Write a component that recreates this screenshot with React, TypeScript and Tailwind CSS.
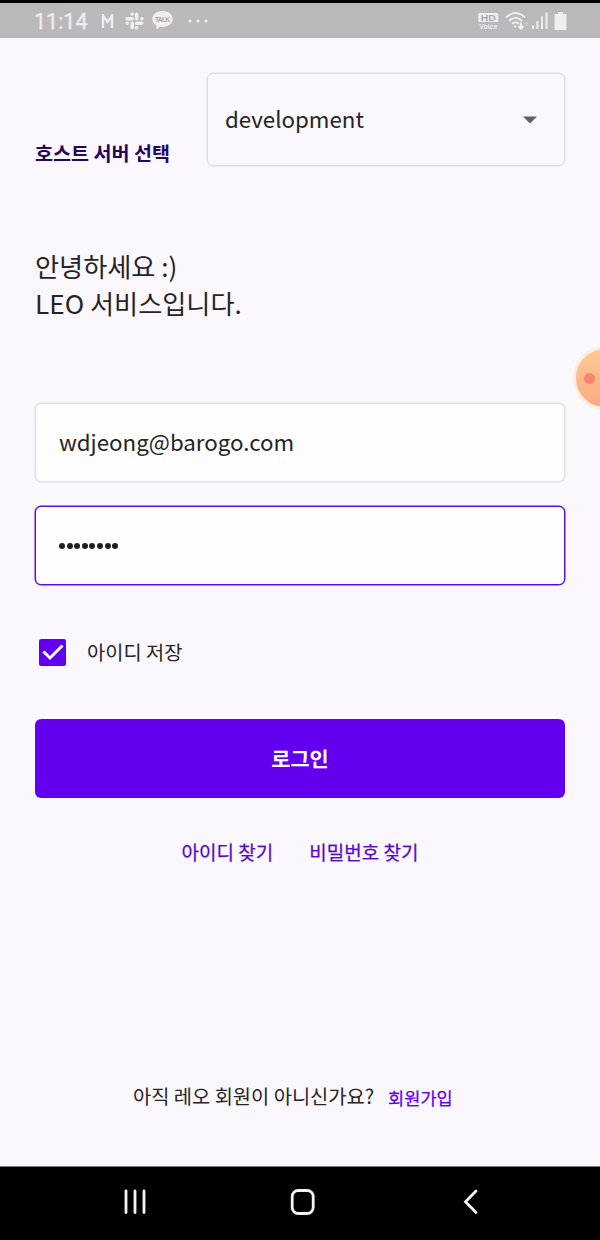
import type { ReactNode } from 'react';

function StatusBar() {
  return (
    <header className="flex h-[38px] shrink-0 items-center border-t-[3px] border-black bg-[#bbb8bb] pl-[34px] pr-[33px] text-[#efedef]">
      <span className="w-[54px] pt-[2px] font-['Roboto'] text-[21.500px] leading-[33px] [-webkit-text-stroke:0.3px]">11:14</span>
      <svg className="ml-[13px]" width="13" height="14" viewBox="0 0 13 14" fill="none" stroke="currentColor" strokeWidth="2.300">
        <path d="M2 14V1.500L6.500 8L11 1.500V14" />
      </svg>
      <svg className="ml-[11px]" width="19" height="18" viewBox="0 0 19 18" fill="none" stroke="currentColor" strokeWidth="3.600" strokeLinecap="round">
        <path d="M7.200 2v.1M7.200 6.700H2.200M11.600 2.300V6.700M16.800 6.700v.1M11.600 11.200H16.600M11.600 15.800v.1M7.200 11.200V15.700M2.200 11.200v.1" />
      </svg>
      <svg className="ml-2" width="21" height="19" viewBox="0 0 21 19">
        <path fill="currentColor" d="M10.500 0C4.700 0 .3 3.500.3 8c0 3 1.800 5.400 4.500 6.800L4 18.400l4.600-2.600 1.900.1C16.300 15.900 20.700 12.500 20.700 8S16.300 0 10.500 0Z" />
        <text x="10.500" y="10.500" fill="#a9a6a9" fontFamily="Liberation Sans" fontSize="6.600" fontWeight="700" textAnchor="middle" textLength="15">TALK</text>
      </svg>
      <svg className="ml-[15px]" width="21" height="4" viewBox="0 0 21 4" fill="currentColor">
        <circle cx="2" cy="2" r="1.600" /><circle cx="10" cy="2" r="1.600" /><circle cx="18" cy="2" r="1.600" />
      </svg>
      <svg className="ml-auto" width="21" height="18" viewBox="0 0 21 18">
        <rect x=".3" y="1" width="20" height="9" rx="1.500" fill="currentColor" />
        <text x="10.300" y="8.800" fill="#aaa7aa" fontFamily="Liberation Sans" fontSize="8.500" fontWeight="700" textAnchor="middle" textLength="15" lengthAdjust="spacingAndGlyphs">HD</text>
        <text x="10.300" y="17" fill="currentColor" fontFamily="Liberation Sans" fontSize="7" fontWeight="700" textAnchor="middle" textLength="18">Voice</text>
      </svg>
      <svg className="ml-[6px]" width="24" height="20" viewBox="0 0 24 20" fill="none" stroke="currentColor" strokeWidth="1.900">
        <path d="M1 6.500Q10.500-2.500 20 6.500M4 10Q10.500 3.500 17 10M7 13Q10.500 9.500 14 13" />
        <circle cx="10" cy="15.500" r="1.200" fill="currentColor" stroke="none" />
        <path d="M16 11.500V17M13.500 15L16 17.800L18.500 15" />
        <path d="M21.500 15V11.500M20 13L21.500 11.300L23 13" strokeWidth="1" opacity=".5" />
      </svg>
      <svg className="ml-[3px]" width="18" height="17" viewBox="0 0 18 17" fill="currentColor">
        <path d="M0 13.500h2V17H0ZM4.500 9h2v8h-2ZM9 4.500h2V17H9ZM13.500 0.500h2V17h-2Z" />
      </svg>
      <svg className="ml-[4px]" width="13" height="18" viewBox="0 0 13 18" fill="currentColor">
        <path d="M4 0h5v2h2.500a1 1 0 0 1 1 1v14a1 1 0 0 1-1 1h-10a1 1 0 0 1-1-1V3a1 1 0 0 1 1-1H4Z" />
      </svg>
    </header>
  );
}

function Field({ focused = false, children }: { focused?: boolean; children: ReactNode }) {
  return (
    <div
      className={
        focused
          ? 'flex h-[79px] items-center rounded-[6px] border border-[#5a12d0] bg-[#fefefe] pl-[23px] shadow-[0_0_0_0.5px_#5a12d0]'
          : 'flex h-[79px] items-center rounded-[6px] border border-[#e0dee1] bg-[#fefefe] pl-[23px] shadow-[0_0_0_0.5px_#e0dee1]'
      }
    >
      {children}
    </div>
  );
}

function NavBar() {
  return (
    <nav className="flex h-[74px] shrink-0 items-center border-t border-[#777] bg-black pb-[3px] text-[#f4f4f4]">
      <svg className="ml-[123px]" width="24" height="26" viewBox="0 0 24 26" stroke="currentColor" strokeWidth="2.800" strokeLinecap="round">
        <path d="M3 2V23.500M12 2V23.500M21 2V23.500" />
      </svg>
      <svg className="ml-[143px]" width="26" height="28" viewBox="0 0 26 28" fill="none" stroke="currentColor" strokeWidth="2.800">
        <rect x="2.200" y="2.500" width="21" height="23" rx="6" />
      </svg>
      <svg className="ml-[146px]" width="18" height="26" viewBox="0 0 18 26" fill="none" stroke="currentColor" strokeWidth="2.800" strokeLinecap="round">
        <path d="M14 2L3.500 12.800L14 23.500" />
      </svg>
    </nav>
  );
}

export default function App() {
  return (
    <div className="relative flex h-[1240px] w-[600px] flex-col overflow-hidden bg-[#faf8fc] font-['Noto_Sans_CJK_KR',sans-serif] text-[#252427]">
      <StatusBar />
      <main className="flex flex-1 flex-col px-[35px] pt-[35px]">
        <div className="flex h-[94px] justify-between">
          <label className="mt-[65px] text-[19.600px] leading-[30px] font-bold text-[#28065f]">호스트 서버 선택</label>
          <button className="flex h-[93px] w-[358px] items-center justify-between rounded-[6px] border border-[#dfdde1] pr-[27px] pl-[17px] shadow-[0_0_0_0.5px_#dfdde1]">
            <span className="pb-[3px] text-[22.300px] leading-[34px]">development</span>
            <svg width="14" height="8" viewBox="0 0 14 8" fill="#626064"><path d="M0 0.500h14L7 7.500Z" /></svg>
          </button>
        </div>
        <h1 className="mt-[81px] text-[26.200px] leading-[37px] font-normal">
          안녕하세요 :)<br />LEO 서비스입니다.
        </h1>
        <div className="mt-[81px] flex flex-col gap-[24px]">
          <Field><span className="pb-[3px] text-[22.300px] leading-[34px]">wdjeong@barogo.com</span></Field>
          <Field focused>
            <span className="flex gap-[1.600px]">
              {Array.from({ length: 8 }, (_, i) => <i key={i} className="size-[6px] rounded-full bg-[#202020]" />)}
            </span>
          </Field>
        </div>
        <label className="mt-[53px] flex h-[28px] items-center pl-[4px]">
          <span className="flex size-[27px] items-center justify-center rounded-[2px] bg-[#6200ee]">
            <svg width="22" height="18" viewBox="0 0 22 18" fill="none" stroke="#fff" strokeWidth="3"><path d="M1.500 8.500L8 15L20.500 2.500" /></svg>
          </span>
          <span className="ml-[21px] text-[19.800px] leading-[28px]">아이디 저장</span>
        </label>
        <button className="mt-[53px] h-[79px] rounded-[6px] bg-[#6200ee] text-[20.800px] font-bold text-white">로그인</button>
        <div className="mt-[40px] flex justify-center gap-[36px] text-[19px] leading-[28px] text-[#5707ce] [-webkit-text-stroke:0.25px]">
          <a>아이디 찾기</a>
          <a>비밀번호 찾기</a>
        </div>
        <p className="mt-auto mb-[55px] flex items-baseline pl-[98px] text-[19.800px] leading-[28px] whitespace-nowrap">
          아직 레오 회원이 아니신가요?
          <a className="relative top-px ml-[14px] text-[17.600px] text-[#6200ee] [-webkit-text-stroke:0.25px]">회원가입</a>
        </p>
      </main>
      <NavBar />
      <div className="absolute top-[346px] left-[573px] flex size-[64px] items-center rounded-full border-[3px] border-[#faeee3] bg-linear-to-b from-[#fdca93] to-[#faab80] pl-[8px]">
        <span className="size-[11px] rounded-full bg-[#fa8375]" />
      </div>
    </div>
  );
}
